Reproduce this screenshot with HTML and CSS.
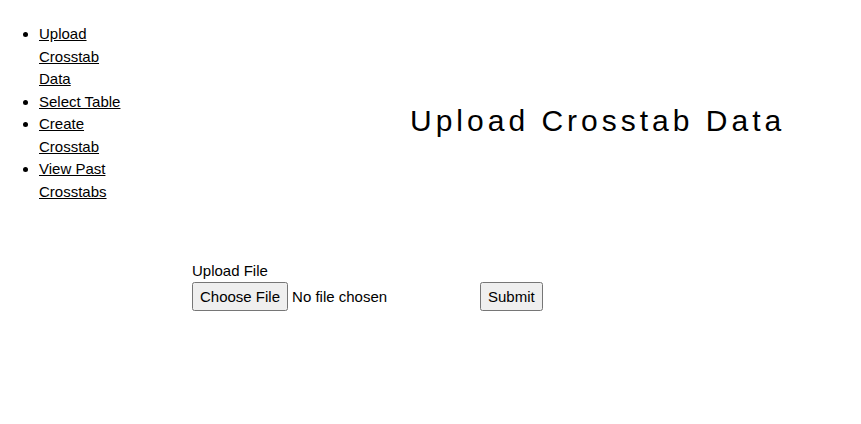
FILE: index.html
```html
<!DOCTYPE html>
<html>
<head>
<meta charset="utf-8">
<link rel="stylesheet" href="styles.css">
</head>
<body>
<div class="page">
  <nav class="sidebar">
    <ul class="nav-list">
      <li><a href="#">Upload Crosstab Data</a></li>
      <li><a href="#">Select Table</a></li>
      <li><a href="#">Create Crosstab</a></li>
      <li><a href="#">View Past Crosstabs</a></li>
    </ul>
  </nav>
  <main class="main">
    <h1 class="title">Upload Crosstab Data</h1>
    <form class="upload-form">
      <label class="field-label" for="file">Upload File</label>
      <div class="field-row">
        <input class="file-input" id="file" type="file">
        <button class="submit-btn" type="submit">Submit</button>
      </div>
    </form>
  </main>
</div>
</body>
</html>
```

FILE: styles.css
```css
html, body {
  margin: 0;
  padding: 0;
  background: #fff;
}
body {
  font-family: "Liberation Sans", Arial, sans-serif;
  font-size: 15px;
  color: #000;
}
.page {
  display: flex;
  padding: 8px 0 0 0;
}
.sidebar {
  width: 130px;
  flex: none;
}
.nav-list {
  margin: 15px 0 0 0;
  padding-left: 39px;
  line-height: 22.5px;
}
.nav-list a {
  color: #000;
}
.main {
  flex: 1;
  padding-left: 62px;
}
.title {
  margin: 96px 0 0 218px;
  font-size: 30px;
  font-weight: normal;
  letter-spacing: 4px;
  line-height: 34px;
}
.upload-form {
  margin-top: 123px;
  display: flex;
  flex-direction: column;
}
.field-label {
  line-height: 20px;
}
.field-row {
  display: flex;
  align-items: center;
  margin-top: 1px;
}
.file-input {
  font-family: "Liberation Sans", Arial, sans-serif;
  font-size: 15px;
  width: 288px;
  margin: 0;
}
.file-input::file-selector-button {
  font-family: "Liberation Sans", Arial, sans-serif;
  font-size: 15px;
  padding: 4px 6px;
}
.submit-btn {
  font-family: "Liberation Sans", Arial, sans-serif;
  font-size: 15px;
  padding: 4px 6px;
  margin: 0;
}
```
